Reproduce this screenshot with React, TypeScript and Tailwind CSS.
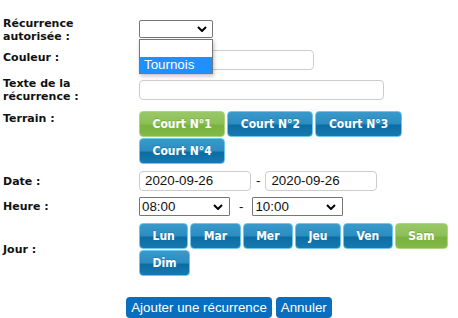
import React from "react";

const label = "w-[139px] shrink-0 pl-[3px]";
const labelText = "w-[120px] text-[11px] leading-[13px] font-bold text-[#111]";

const tileBase =
    "h-[26px] px-[12.5px] rounded-[4px] border font-['DejaVu_Sans_Condensed','DejaVu_Sans',sans-serif] text-[12px] leading-[24px] font-bold text-white [text-shadow:0_-1px_0_rgba(0,0,0,0.15)]";
const tileBlue =
    "border-[#6fc6ec] bg-[linear-gradient(to_bottom,#3a99ca_0%,#2b8dc1_48%,#0c6da4_56%,#1679b0_100%)]";
const tileGreen =
    "border-[#acd683] bg-[linear-gradient(to_bottom,#99c866_0%,#8cc057_48%,#79b33d_56%,#82b948_100%)]";

const textInput = "h-[20px] rounded-[4px] border border-[#cccccc] bg-white";

function Chevron() {
    return (
        <svg width="10" height="6" viewBox="0 0 10 6" className="shrink-0">
            <path d="M1 1l4 4 4-4" fill="none" stroke="#000" strokeWidth="2" />
        </svg>
    );
}

function Tile({ text, active }: { text: string; active?: boolean }) {
    return (
        <button type="button" className={`${tileBase} ${active ? tileGreen : tileBlue}`}>
            {text}
        </button>
    );
}

const courts = ["Court N°1", "Court N°2", "Court N°3", "Court N°4"];
const days = ["Lun", "Mar", "Mer", "Jeu", "Ven", "Sam", "Dim"];

export default function App() {
    return (
        <div className="w-[458px] h-[318px] overflow-hidden bg-white font-['DejaVu_Sans',sans-serif] pt-[17px]">
            {/* Récurrence autorisée */}
            <div className="flex h-[26px]">
                <div className={label}>
                    <div className={labelText}>Récurrence autorisée&nbsp;:</div>
                </div>
                <div className="relative flex-1 pt-[3px]">
                    <div className="w-[74px] h-[18px] border border-[#767676] rounded-[2px] bg-white flex items-center justify-end pr-[5px]">
                        <Chevron />
                    </div>
                    <div className="absolute z-10 left-0 top-[22px] w-[74px] border border-[#767676] bg-white shadow-[1px_2px_4px_rgba(0,0,0,0.25)] font-['Liberation_Sans',Arial,sans-serif] text-[13.33px] leading-[16px]">
                        <div className="h-[17px]" />
                        <div className="h-[16px] bg-[#1e90ff] text-white pl-[4px]">Tournois</div>
                    </div>
                </div>
            </div>

            {/* Couleur */}
            <div className="flex mt-[7px] h-[20px]">
                <div className={`${label} pt-[1px]`}>
                    <div className={labelText}>Couleur&nbsp;:</div>
                </div>
                <div className="flex-1">
                    <div className={`${textInput} w-[175px]`} />
                </div>
            </div>

            {/* Texte de la récurrence */}
            <div className="flex items-center mt-[7px] h-[26px]">
                <div className={label}>
                    <div className={labelText}>Texte de la récurrence&nbsp;:</div>
                </div>
                <div className="flex-1">
                    <div className={`${textInput} w-[245px]`} />
                </div>
            </div>

            {/* Terrain */}
            <div className="flex mt-[8px]">
                <div className={`${label} pt-[1px]`}>
                    <div className={labelText}>Terrain&nbsp;:</div>
                </div>
                <div className="flex-1 flex flex-wrap gap-x-[2px] gap-y-[1px]">
                    {courts.map((c, i) => (
                        <Tile key={c} text={c} active={i === 0} />
                    ))}
                </div>
            </div>

            {/* Date */}
            <div className="flex items-center mt-[7px] h-[20px]">
                <div className={label}>
                    <div className={labelText}>Date&nbsp;:</div>
                </div>
                <div className="flex-1 flex items-center font-['Liberation_Sans',Arial,sans-serif] text-[13.33px] text-[#111]">
                    <div className={`${textInput} w-[112px] pl-[5px] leading-[18px]`}>2020-09-26</div>
                    <span className="mx-[5px]">-</span>
                    <div className={`${textInput} w-[112px] pl-[5px] leading-[18px]`}>2020-09-26</div>
                </div>
            </div>

            {/* Heure */}
            <div className="flex items-center mt-[6px] h-[19px]">
                <div className={label}>
                    <div className={labelText}>Heure&nbsp;:</div>
                </div>
                <div className="flex-1 flex items-center font-['Liberation_Sans',Arial,sans-serif] text-[13.33px] text-[#111]">
                    <div className="w-[91px] h-[19px] border border-[#767676] rounded-[1px] flex items-center justify-between pl-[2px] pr-[6px]">
                        <span>08:00</span>
                        <Chevron />
                    </div>
                    <span className="mx-[9px]">-</span>
                    <div className="w-[91px] h-[19px] border border-[#767676] rounded-[1px] flex items-center justify-between pl-[2px] pr-[6px]">
                        <span>10:00</span>
                        <Chevron />
                    </div>
                </div>
            </div>

            {/* Jour */}
            <div className="flex items-center mt-[7px]">
                <div className={label}>
                    <div className={labelText}>Jour&nbsp;:</div>
                </div>
                <div className="flex-1 flex flex-wrap gap-x-[2px] gap-y-[1px]">
                    {days.map(d => (
                        <Tile key={d} text={d} active={d === "Sam"} />
                    ))}
                </div>
            </div>

            {/* actions */}
            <div className="flex justify-center gap-[4px] mt-[21px] font-['Liberation_Sans',Arial,sans-serif] text-[13.33px]">
                <button type="button" className="h-[21px] px-[5px] rounded-[4px] bg-[#0a6ebd] text-white leading-[21px]">
                    Ajouter une récurrence
                </button>
                <button type="button" className="h-[21px] px-[5px] rounded-[4px] bg-[#0a6ebd] text-white leading-[21px]">
                    Annuler
                </button>
            </div>
        </div>
    );
}
